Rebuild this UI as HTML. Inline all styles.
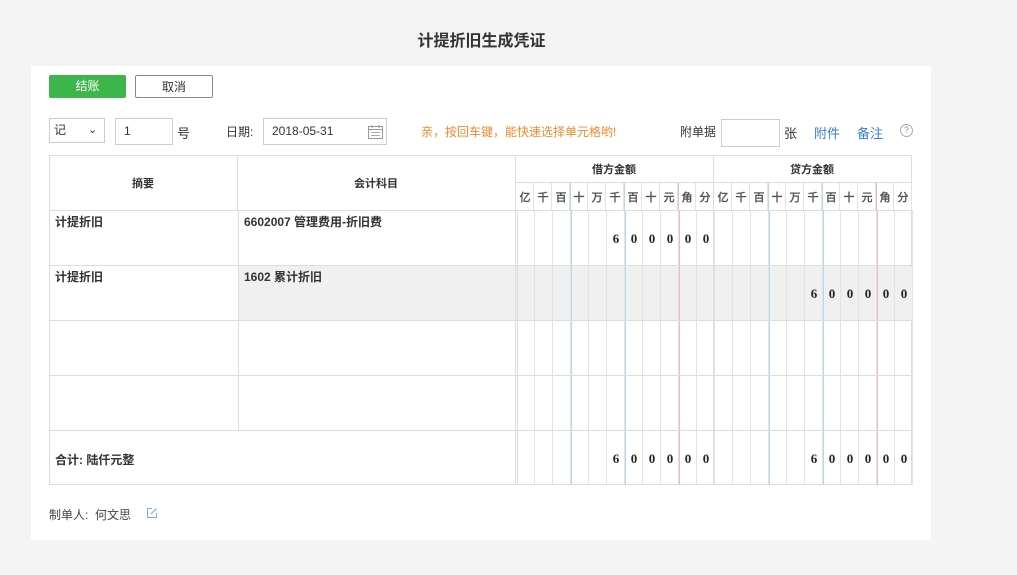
<!DOCTYPE html>
<html><head><meta charset="utf-8"><style>
body{margin:0;width:1017px;height:575px;background:#f4f4f4;font-family:"Liberation Sans","Noto Sans CJK SC",sans-serif;font-size:12px;color:#333;position:relative;overflow:hidden}
.a{position:absolute}
.panel{left:31px;top:66px;width:900px;height:474px;background:#fff}
.title{left:0;width:963px;top:27px;text-align:center;font-size:16px;font-weight:bold;color:#333}
.btn{height:23px;line-height:23px;text-align:center;font-size:12px;box-sizing:border-box}
.inp{border:1px solid #ccc;box-sizing:border-box;background:#fff}
.lines{background:
 linear-gradient(90deg,transparent 162px,#f3b9b9 162px,#f3b9b9 163px,transparent 163px),
 linear-gradient(90deg,transparent 54px,#b8d8f0 54px,#b8d8f0 55px,transparent 55px,transparent 108px,#b8d8f0 108px,#b8d8f0 109px,transparent 109px),
 linear-gradient(90deg,transparent 17px,#e3e3e3 17px,#e3e3e3 18px);
 background-size:198px 100%,198px 100%,18px 100%;background-repeat:no-repeat,no-repeat,repeat-x}
.hl{height:1px;background:#ddd}
.vl{width:1px;background:#ddd}
.d{display:flex}
.d span{width:18px;text-align:center;font-weight:bold;font-size:13px;font-family:"Liberation Serif",serif;color:#222}
.h span{width:18px;text-align:center;font-size:11px;color:#555}
.b{font-weight:bold;font-size:12px;color:#333}
</style></head><body>
<div class="a title">计提折旧生成凭证</div>
<div class="a panel"></div>
<div class="a btn" style="left:49px;top:75px;width:77px;background:#3cb54a;color:#fff;border-radius:2px">结账</div>
<div class="a btn" style="left:135px;top:75px;width:78px;border:1px solid #888;color:#333;border-radius:2px">取消</div>

<div class="a inp" style="left:49px;top:118px;width:56px;height:25px;line-height:23px;padding-left:4px">记<span style="position:absolute;left:38px;top:0;font-size:11px">&#8964;</span></div>
<div class="a inp" style="left:115px;top:118px;width:58px;height:27px;line-height:25px;padding-left:8px">1</div>
<div class="a" style="left:177px;top:123px;font-size:13px">号</div>
<div class="a" style="left:226px;top:123px;font-size:12px">日期:</div>
<div class="a inp" style="left:263px;top:118px;width:124px;height:27px;line-height:25px;padding-left:8px">2018-05-31
<svg style="position:absolute;left:104px;top:6px" width="15" height="14" viewBox="0 0 15 14"><rect x="0.5" y="1.5" width="14" height="12" fill="none" stroke="#999"/><line x1="0.5" y1="4.5" x2="14.5" y2="4.5" stroke="#999"/><line x1="3" y1="7.5" x2="12" y2="7.5" stroke="#aaa"/><line x1="3" y1="10.5" x2="12" y2="10.5" stroke="#aaa"/><line x1="4" y1="0" x2="4" y2="3" stroke="#999"/><line x1="11" y1="0" x2="11" y2="3" stroke="#999"/></svg></div>
<div class="a" style="left:421px;top:123px;color:#f08a2c;font-size:12px">亲，按回车键，能快速选择单元格哟!</div>
<div class="a" style="left:680px;top:123px;font-size:12px">附单据</div>
<div class="a inp" style="left:721px;top:119px;width:59px;height:28px"></div>
<div class="a" style="left:784px;top:123px;font-size:13px">张</div>
<div class="a" style="left:814px;top:123px;color:#3a7fd0;font-size:13px">附件</div>
<div class="a" style="left:857px;top:123px;color:#3a7fd0;font-size:13px">备注</div>
<div class="a" style="left:900px;top:124px;width:11px;height:11px;border:1px solid #aaa;border-radius:50%;font-size:9px;line-height:11px;text-align:center;color:#999">?</div>

<div class="a" style="left:49px;top:155px;width:863px;height:330px;border:1px solid #ddd;box-sizing:border-box"></div>
<div class="a" style="left:238px;top:265px;width:674px;height:55px;background:#f0f0f0"></div>
<div class="a lines" style="left:517px;top:210px;width:198px;height:275px"></div>
<div class="a lines" style="left:715px;top:210px;width:198px;height:275px"></div>
<div class="a lines" style="left:516px;top:182px;width:198px;height:28px"></div>
<div class="a lines" style="left:714px;top:182px;width:198px;height:28px"></div>
<div class="a vl" style="left:237px;top:155px;height:55px"></div>
<div class="a vl" style="left:238px;top:210px;height:220px"></div>
<div class="a vl" style="left:515px;top:155px;height:330px"></div>
<div class="a vl" style="left:517px;top:210px;height:275px"></div>
<div class="a vl" style="left:713px;top:155px;height:330px"></div>
<div class="a hl" style="left:515px;top:182px;width:397px"></div>
<div class="a hl" style="left:49px;top:210px;width:863px"></div>
<div class="a hl" style="left:49px;top:265px;width:863px"></div>
<div class="a hl" style="left:49px;top:320px;width:863px"></div>
<div class="a hl" style="left:49px;top:375px;width:863px"></div>
<div class="a hl" style="left:49px;top:430px;width:863px"></div>

<div class="a b" style="left:49px;width:188px;top:175px;text-align:center;font-size:11px">摘要</div>
<div class="a b" style="left:237px;width:278px;top:175px;text-align:center;font-size:11px">会计科目</div>
<div class="a b" style="left:515px;width:198px;top:161px;text-align:center;font-size:11px">借方金额</div>
<div class="a b" style="left:713px;width:198px;top:161px;text-align:center;font-size:11px">贷方金额</div>
<div class="a d h" style="left:516px;top:189px"><span>亿</span><span>千</span><span>百</span><span>十</span><span>万</span><span>千</span><span>百</span><span>十</span><span>元</span><span>角</span><span>分</span></div>
<div class="a d h" style="left:714px;top:189px"><span>亿</span><span>千</span><span>百</span><span>十</span><span>万</span><span>千</span><span>百</span><span>十</span><span>元</span><span>角</span><span>分</span></div>

<div class="a b" style="left:55px;top:213px">计提折旧</div>
<div class="a b" style="left:244px;top:213px">6602007 管理费用-折旧费</div>
<div class="a b" style="left:55px;top:268px">计提折旧</div>
<div class="a b" style="left:244px;top:268px">1602 累计折旧</div>
<div class="a b" style="left:55px;top:451px">合计: 陆仟元整</div>

<div class="a d" style="left:607px;top:231px"><span>6</span><span>0</span><span>0</span><span>0</span><span>0</span><span>0</span></div>
<div class="a d" style="left:805px;top:286px"><span>6</span><span>0</span><span>0</span><span>0</span><span>0</span><span>0</span></div>
<div class="a d" style="left:607px;top:451px"><span>6</span><span>0</span><span>0</span><span>0</span><span>0</span><span>0</span></div>
<div class="a d" style="left:805px;top:451px"><span>6</span><span>0</span><span>0</span><span>0</span><span>0</span><span>0</span></div>

<div class="a" style="left:49px;top:506px;font-size:12px;color:#444">制单人:&nbsp; 何文思</div>
<svg class="a" style="left:146px;top:507px" width="12" height="12" viewBox="0 0 12 12"><path d="M6 1.5H1.5v9h9V6" fill="none" stroke="#7aaee0"/><path d="M5 7l5.5-5.5" stroke="#7aaee0" stroke-width="1.2"/></svg>
</body></html>
